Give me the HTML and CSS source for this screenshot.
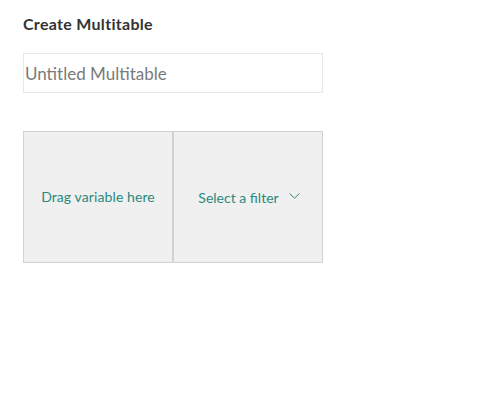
FILE: index.html
```html
<!DOCTYPE html>
<html>
<head>
<meta charset="utf-8">
<link rel="stylesheet" href="styles.css">
</head>
<body>
<div class="page">
  <h1 class="title">Create Multitable</h1>
  <input class="name-input" type="text" placeholder="Untitled Multitable">
  <div class="grid">
    <div class="cell drop">Drag variable here</div>
    <div class="cell filter">
      <span>Select a filter</span>
      <svg class="chev" width="11" height="6" viewBox="0 0 11 6"><path d="M0.5 0.5 L5.5 5.2 L10.5 0.5" fill="none" stroke="#2b8a7c" stroke-width="1"/></svg>
    </div>
  </div>
</div>
</body>
</html>
```
FILE: styles.css
```css
html, body {
  margin: 0;
  padding: 0;
  background: #fff;
}
body {
  font-family: Lato, "Open Sans", sans-serif;
}
.page {
  padding: 14px 23px;
}
.title {
  margin: 0;
  font-size: 16px;
  font-weight: 700;
  letter-spacing: 0.3px;
  color: #333;
  line-height: 20px;
}
.name-input {
  display: block;
  box-sizing: border-box;
  margin-top: 19px;
  width: 300px;
  height: 40px;
  border: 1px solid #e8e8e8;
  padding: 0 1px;
  font-family: Lato, "Open Sans", sans-serif;
  font-size: 17px;
  color: #333;
  outline: none;
}
.name-input::placeholder {
  color: #7a7a7a;
}
.grid {
  display: flex;
  margin-top: 38px;
}
.cell {
  box-sizing: border-box;
  width: 150px;
  height: 132px;
  background: #f0f0f0;
  border: 1px solid #d2d2d2;
  display: flex;
  align-items: center;
  justify-content: center;
  font-size: 14px;
  color: #2b8a7c;
  padding-bottom: 2px;
}
.drop {
  letter-spacing: 0.1px;
}
.filter {
  gap: 10px;
  padding-bottom: 0;
  padding-left: 2px;
}
.chev {
  margin-top: -3px;
}
```
